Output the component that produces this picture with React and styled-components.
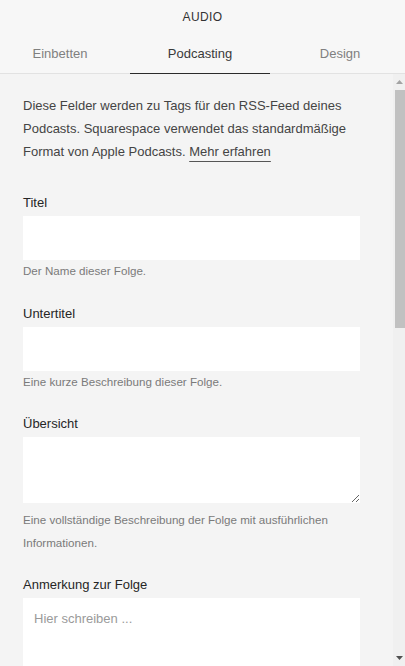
import React from 'react'
import styled, { createGlobalStyle } from 'styled-components'

const GlobalStyle = createGlobalStyle`
  html, body {
    margin: 0;
    padding: 0;
    background: #f4f4f4;
    font-family: "Liberation Sans", Arial, sans-serif;
  }
`

const Panel = styled.div`
  width: 405px;
  height: 666px;
  display: flex;
  flex-direction: column;
  overflow: hidden;
  background: #f4f4f4;
`

const Header = styled.header`
  flex: none;
  background: #f7f7f7;
  border-bottom: 1px solid #e2e2e2;
`

const PanelTitle = styled.div`
  height: 33px;
  display: flex;
  align-items: center;
  justify-content: center;
  font-size: 12px;
  letter-spacing: 0.4px;
  color: #333;
`

const Tabs = styled.nav`
  display: grid;
  grid-template-columns: 130px 140px 1fr;
  height: 40px;
`

const Tab = styled.div`
  display: flex;
  align-items: center;
  justify-content: center;
  font-size: 13px;
  color: ${p => (p.$active ? '#3a3a3a' : '#808080')};
  border-bottom: 1.5px solid ${p => (p.$active ? '#2b2b2b' : 'transparent')};
  margin-bottom: -1px;
  padding: ${p => p.$pad || '0'};
`

const Main = styled.div`
  flex: 1;
  display: flex;
  min-height: 0;
`

const Content = styled.div`
  flex: 1;
  padding: 20px 33px 0 23px;
  overflow: hidden;
`

const Intro = styled.p`
  margin: 0 0 32px;
  font-size: 13px;
  line-height: 23px;
  color: #444;
`

const Link = styled.a`
  color: #444;
  text-decoration: underline;
  text-decoration-color: #555;
  text-underline-offset: 5px;
  text-decoration-thickness: 1px;
`

const Field = styled.div`
  display: flex;
  flex-direction: column;
  margin-bottom: 23px;
`

const Label = styled.label`
  font-size: 13px;
  line-height: 16px;
  color: #262626;
  margin-bottom: 5px;
`

const Input = styled.input`
  display: block;
  box-sizing: border-box;
  width: 100%;
  height: 44px;
  border: none;
  outline: none;
  background: #fff;
  padding: 0 11px;
  font: inherit;
  font-size: 13px;
`

const TextArea = styled.textarea`
  display: block;
  box-sizing: border-box;
  width: 100%;
  height: ${p => p.$h}px;
  border: none;
  outline: none;
  background: #fff;
  padding: 13px 11px;
  font-family: "Liberation Sans", Arial, sans-serif;
  font-size: 13px;
  color: #333;
  resize: ${p => (p.$resize ? 'vertical' : 'none')};

  &::placeholder {
    color: #9a9a9a;
  }
`

const Hint = styled.div`
  font-size: 11.6px;
  line-height: 22.5px;
  color: #7a7a7a;
  margin-top: ${p => p.$mt || 0}px;
`

const ScrollBar = styled.div`
  flex: none;
  width: 12px;
  display: flex;
  flex-direction: column;
  background: #f0f0f0;
`

const Arrow = styled.div`
  height: 16px;
  display: flex;
  align-items: center;
  justify-content: center;
  flex: none;
`

const Track = styled.div`
  flex: 1;
  display: flex;
  flex-direction: column;
  padding-left: 2px;
`

const Thumb = styled.div`
  height: 238px;
  background: #c1c1c1;
`

const Tri = ({ down }) => (
  <svg width="7" height="4" viewBox="0 0 7 4">
    <polygon
      points={down ? '0,0 7,0 3.5,4' : '0,4 7,4 3.5,0'}
      fill={down ? '#505050' : '#a3a3a3'}
    />
  </svg>
)

export default function App() {
  return (
    <>
      <GlobalStyle />
      <Panel>
        <Header>
          <PanelTitle>AUDIO</PanelTitle>
          <Tabs>
            <Tab $pad="0 10px 0 0">Einbetten</Tab>
            <Tab $active>Podcasting</Tab>
            <Tab $pad="0 0 0 5px">Design</Tab>
          </Tabs>
        </Header>
        <Main>
          <Content>
            <Intro>
              Diese Felder werden zu Tags für den RSS-Feed deines Podcasts.
              Squarespace verwendet das standardmäßige Format von Apple
              Podcasts. <Link href="#">Mehr erfahren</Link>
            </Intro>

            <Field>
              <Label>Titel</Label>
              <Input />
              <Hint>Der Name dieser Folge.</Hint>
            </Field>

            <Field>
              <Label>Untertitel</Label>
              <Input />
              <Hint>Eine kurze Beschreibung dieser Folge.</Hint>
            </Field>

            <Field>
              <Label>Übersicht</Label>
              <TextArea $h={66} $resize />
              <Hint $mt={6}>
                Eine vollständige Beschreibung der Folge mit ausführlichen
                Informationen.
              </Hint>
            </Field>

            <Field>
              <Label>Anmerkung zur Folge</Label>
              <TextArea $h={120} placeholder="Hier schreiben ..." />
            </Field>
          </Content>
          <ScrollBar>
            <Arrow>
              <Tri />
            </Arrow>
            <Track>
              <Thumb />
            </Track>
            <Arrow>
              <Tri down />
            </Arrow>
          </ScrollBar>
        </Main>
      </Panel>
    </>
  )
}
